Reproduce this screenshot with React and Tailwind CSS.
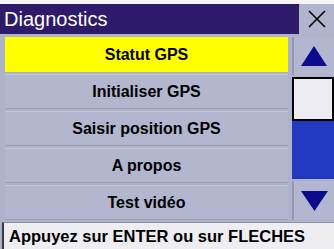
const ITEMS = ["Statut GPS", "Initialiser GPS", "Saisir position GPS", "A propos", "Test vidéo"];

export default function App() {
  const selected = 0;

  return (
    <div
      className="flex h-[249px] w-[334px] flex-col overflow-hidden bg-[#aeb3cc]"
      style={{ fontFamily: '"Liberation Sans", Arial, sans-serif' }}
    >
      <div className="h-[4px] bg-[#f6f6fa]" />

      <div className="flex h-[30px]">
        <div className="flex flex-1 items-center bg-[#2e1a6b] pl-[4px] text-[20px] leading-none text-white">
          Diagnostics
        </div>
        <button className="flex w-[35px] items-center justify-center bg-[#b0b4cc]">
          <svg width="20" height="20" viewBox="0 0 20 20">
            <path d="M2 2 L18 18 M18 2 L2 18" stroke="#000" strokeWidth="1.6" />
          </svg>
        </button>
      </div>

      <div className="flex h-[188px] pt-[3px]">
        <div className="ml-[5px] flex w-[283px] flex-col gap-[2px]">
          {ITEMS.map((item, i) => (
            <div
              key={item}
              className={`flex h-[35px] items-center justify-center text-[16px] font-bold text-black ${
                i === selected
                  ? "bg-[#ffff00]"
                  : "border-t border-b border-t-[#c4c8dc] border-b-[#989db6] bg-[#b2b6cf]"
              }`}
            >
              {item}
            </div>
          ))}
        </div>

        <div className="ml-[4px] flex w-[42px] flex-col gap-[2px]">
          <button className="flex h-[38px] items-center justify-center border-l-2 border-[#9498b2] bg-[#b2b6cf]">
            <svg width="26" height="20" viewBox="0 0 26 20">
              <polygon points="13,0 26,20 0,20" fill="#0b0b8c" />
            </svg>
          </button>
          <div className="flex h-[102px] flex-col">
            <div className="h-[44px] border-2 border-black bg-[#ececf2]" />
            <div className="flex-1 bg-[#2338c0]" />
          </div>
          <button className="flex h-[39px] items-center justify-center border-l-2 border-[#9498b2] bg-[#b2b6cf]">
            <svg width="27" height="20" viewBox="0 0 27 20">
              <polygon points="0,0 27,0 13.5,20" fill="#0b0b8c" />
            </svg>
          </button>
        </div>
      </div>

      <div className="ml-[2px] flex h-[27px] items-center border-l-2 border-t border-l-[#3a3a3a] border-t-[#8c90a8] bg-[#eeeef2] pl-[5px] text-[16.5px] font-bold text-black">
        Appuyez sur ENTER ou sur FLECHES
      </div>
    </div>
  );
}
